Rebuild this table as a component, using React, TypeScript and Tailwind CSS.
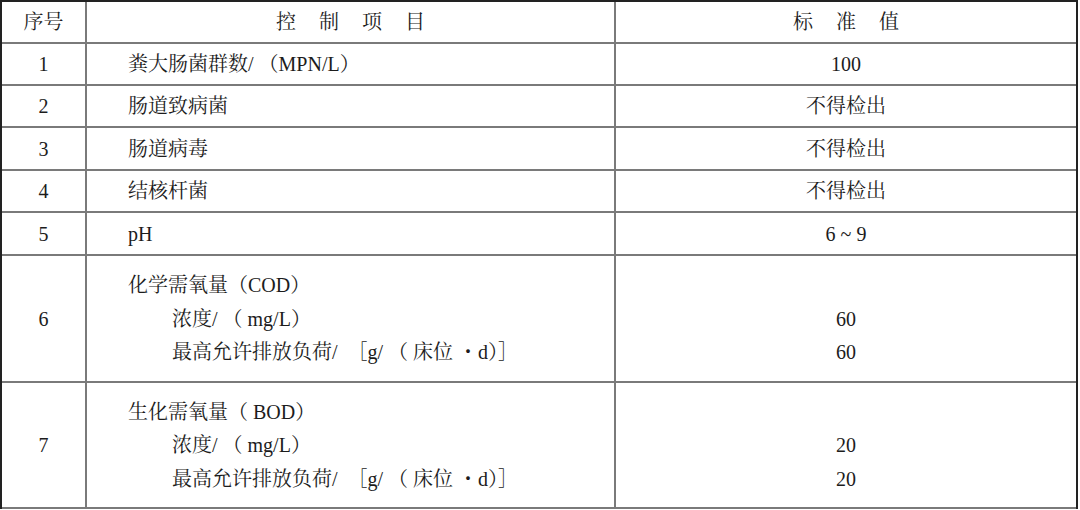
import React from "react";

const font = {
  fontFamily:
    '"Liberation Serif", "Times New Roman", "Noto Serif CJK SC", "Noto Sans CJK SC", serif',
};

type Row = {
  no: string;
  h: string;
  item: React.ReactNode;
  value: React.ReactNode;
};

function Multi({ lines, indent }: { lines: string[]; indent?: boolean }) {
  return (
    <div className="flex flex-col">
      {lines.map((l, i) => (
        <div
          key={i}
          className={
            "h-[33.5px] flex items-center whitespace-pre " +
            (indent && i > 0 ? "pl-[44px]" : "")
          }
        >
          {l}
        </div>
      ))}
    </div>
  );
}

const load = "最高允许排放负荷/  ［g/ （ 床位 ・d）］";

const rows: Row[] = [
  { no: "1", h: "h-[42px]", item: "粪大肠菌群数/ （MPN/L）", value: "100" },
  { no: "2", h: "h-[42px]", item: "肠道致病菌", value: "不得检出" },
  { no: "3", h: "h-[43px]", item: "肠道病毒", value: "不得检出" },
  { no: "4", h: "h-[42px]", item: "结核杆菌", value: "不得检出" },
  { no: "5", h: "h-[43px]", item: "pH", value: "6 ~ 9" },
  {
    no: "6",
    h: "h-[127px]",
    item: <Multi indent lines={["化学需氧量（COD）", "浓度/ （ mg/L）", load]} />,
    value: <Multi lines={["", "60", "60"]} />,
  },
  {
    no: "7",
    h: "h-[126px]",
    item: <Multi indent lines={["生化需氧量（ BOD）", "浓度/ （ mg/L）", load]} />,
    value: <Multi lines={["", "20", "20"]} />,
  },
];

export default function App() {
  return (
    <div className="w-[1080px] h-[510px] bg-white overflow-hidden" style={font}>
      <div className="w-[1078px] border-t-2 border-l-2 border-r-2 border-t-[#222] border-l-[#222] border-r-[#222] text-[20px] text-[#1c1c1c]">
        <div className="flex h-[42px] border-b-2 border-[#7a7a7a]">
          <div className="w-[85px] shrink-0 border-r-2 border-[#7a7a7a] flex items-center justify-center">
            序号
          </div>
          <div className="w-[529px] shrink-0 border-r-2 border-[#7a7a7a] flex items-center justify-center gap-[23px]">
            <span>控</span>
            <span>制</span>
            <span>项</span>
            <span>目</span>
          </div>
          <div className="flex-1 flex items-center justify-center gap-[23px]">
            <span>标</span>
            <span>准</span>
            <span>值</span>
          </div>
        </div>
        {rows.map((r) => (
          <div key={r.no} className={"flex border-b-2 border-[#7a7a7a] " + r.h}>
            <div className="w-[85px] shrink-0 border-r-2 border-[#7a7a7a] flex items-center justify-center">
              {r.no}
            </div>
            <div className="w-[529px] shrink-0 border-r-2 border-[#7a7a7a] flex items-center pl-[41px] whitespace-pre">
              {r.item}
            </div>
            <div className="flex-1 flex items-center justify-center">{r.value}</div>
          </div>
        ))}
      </div>
    </div>
  );
}
